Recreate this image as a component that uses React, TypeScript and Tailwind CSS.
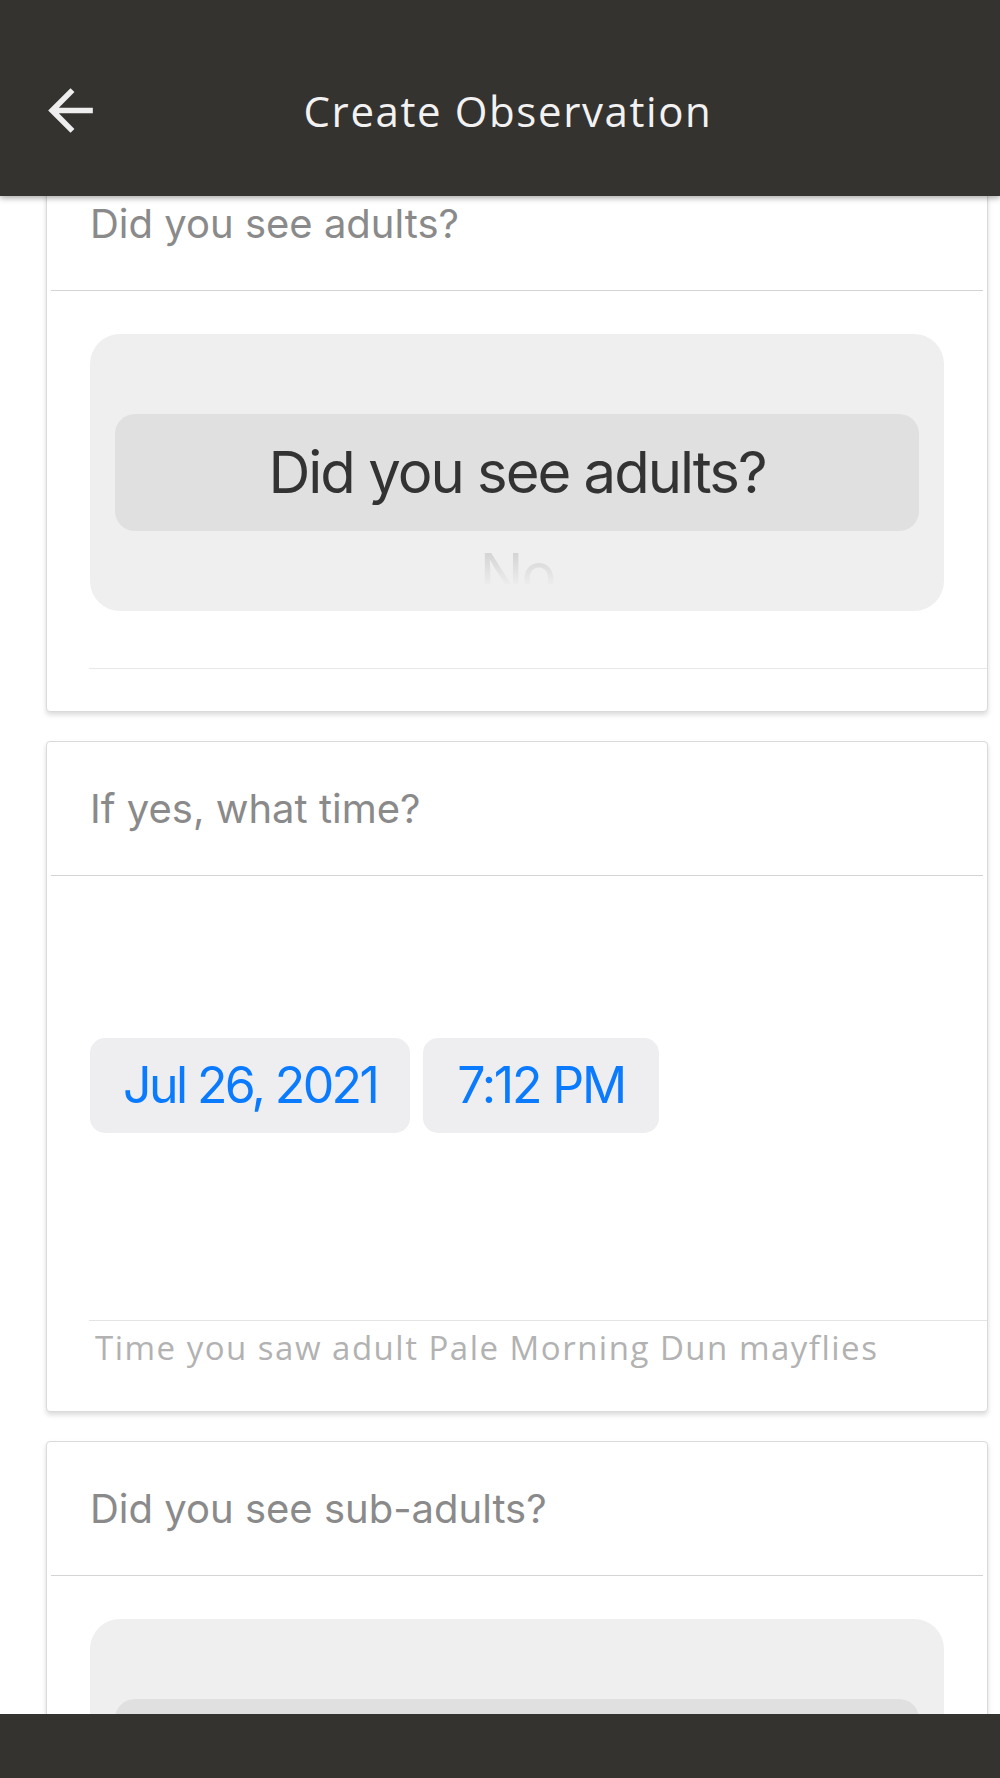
import React from 'react';

const ios = { fontFamily: 'Inter, "Noto Sans", sans-serif' };
const brand = { fontFamily: '"Open Sans", Lato, sans-serif' };

function BackArrow() {
  return (
    <svg width="67" height="67" viewBox="0 0 24 24" fill="#eeeeee">
      <path d="M20 11H7.83l5.59-5.59L12 4l-8 8 8 8 1.41-1.41L7.83 13H20v-2z" />
    </svg>
  );
}

function CardTitle({ text }: { text: string }) {
  return (
    <div className="mx-[4px] flex h-[134px] items-center border-b border-[#d4d4d4] pl-[39px]">
      <span className="text-[40px] text-[#8a8a8a]" style={ios}>
        {text}
      </span>
    </div>
  );
}

// iOS style wheel picker, only the selected row and the next one peeking out
function WheelPicker({ value, next }: { value: string; next?: string }) {
  return (
    <div className="ml-[43px] mr-[43px] flex h-[277px] flex-col rounded-[30px] bg-[#efefef] px-[25px] pt-[80px]">
      <div className="flex h-[117px] items-center justify-center rounded-[20px] bg-[#e0e0e0]">
        <span className="text-[58px] tracking-[-2px] text-[#333333]" style={ios}>
          {value}
        </span>
      </div>
      {next && (
        <div className="flex h-[53px] justify-center overflow-hidden">
          <span
            className="bg-gradient-to-b from-[#c4c4c4] to-[#ececec] bg-clip-text pt-[8px] text-[58px] leading-[70px] tracking-[-2px] text-transparent"
            style={ios}
          >
            {next}
          </span>
        </div>
      )}
    </div>
  );
}

function Card({ children }: { children: React.ReactNode }) {
  return (
    <div className="ml-[46px] mr-[12px] rounded-[4px] border border-[#dadada] bg-white shadow-[0_3px_5px_rgba(0,0,0,0.14)]">
      {children}
    </div>
  );
}

export default function App() {
  return (
    <div className="flex h-[1778px] w-[1000px] flex-col overflow-hidden bg-white">
      <header className="relative z-10 h-[196px] shrink-0 bg-[#353330] pt-[44px] shadow-[0_2px_6px_rgba(0,0,0,0.35)]">
        <div className="flex h-[132px] items-center">
          <div className="flex w-[116px] items-center pl-[37px]">
            <BackArrow />
          </div>
          <h1
            className="flex-1 pr-[100px] text-center text-[42px] tracking-[1.6px] text-[#f2f2f2]"
            style={brand}
          >
            Create Observation
          </h1>
        </div>
      </header>

      <main className="flex-1 overflow-hidden">
        <div className="-mt-[40px] flex flex-col gap-[29px]">
          <Card>
            <CardTitle text="Did you see adults?" />
            <div className="pt-[43px]">
              <WheelPicker value="Did you see adults?" next="No" />
            </div>
            <div className="ml-[42px] mt-[57px] h-px bg-[#e8e8e8]" />
            <div className="h-[42px]" />
          </Card>

          <Card>
            <CardTitle text="If yes, what time?" />
            <div className="flex h-[444px] items-start gap-[13px] pl-[43px] pt-[162px]">
              <button
                className="h-[95px] rounded-[15px] bg-[#eeeef0] px-[33px] text-[50px] tracking-[-2.6px] text-[#0a7aff]"
                style={ios}
              >
                Jul 26, 2021
              </button>
              <button
                className="h-[95px] rounded-[15px] bg-[#eeeef0] px-[34px] text-[50px] tracking-[-2.2px] text-[#0a7aff]"
                style={ios}
              >
                7:12 PM
              </button>
            </div>
            <div className="ml-[42px] h-px bg-[#e4e4e4]" />
            <p
              className="h-[90px] pl-[48px] pt-[2px] text-[33px] tracking-[1.5px] text-[#b2b2b2]"
              style={brand}
            >
              Time you saw adult Pale Morning Dun mayflies
            </p>
          </Card>

          <Card>
            <CardTitle text="Did you see sub-adults?" />
            <div className="pt-[43px]">
              <WheelPicker value="Did you see sub-adults?" next="No" />
            </div>
            <div className="ml-[42px] mt-[57px] h-px bg-[#e8e8e8]" />
            <div className="h-[42px]" />
          </Card>
        </div>
      </main>

      <footer className="h-[64px] shrink-0 bg-[#353330]" />
    </div>
  );
}
